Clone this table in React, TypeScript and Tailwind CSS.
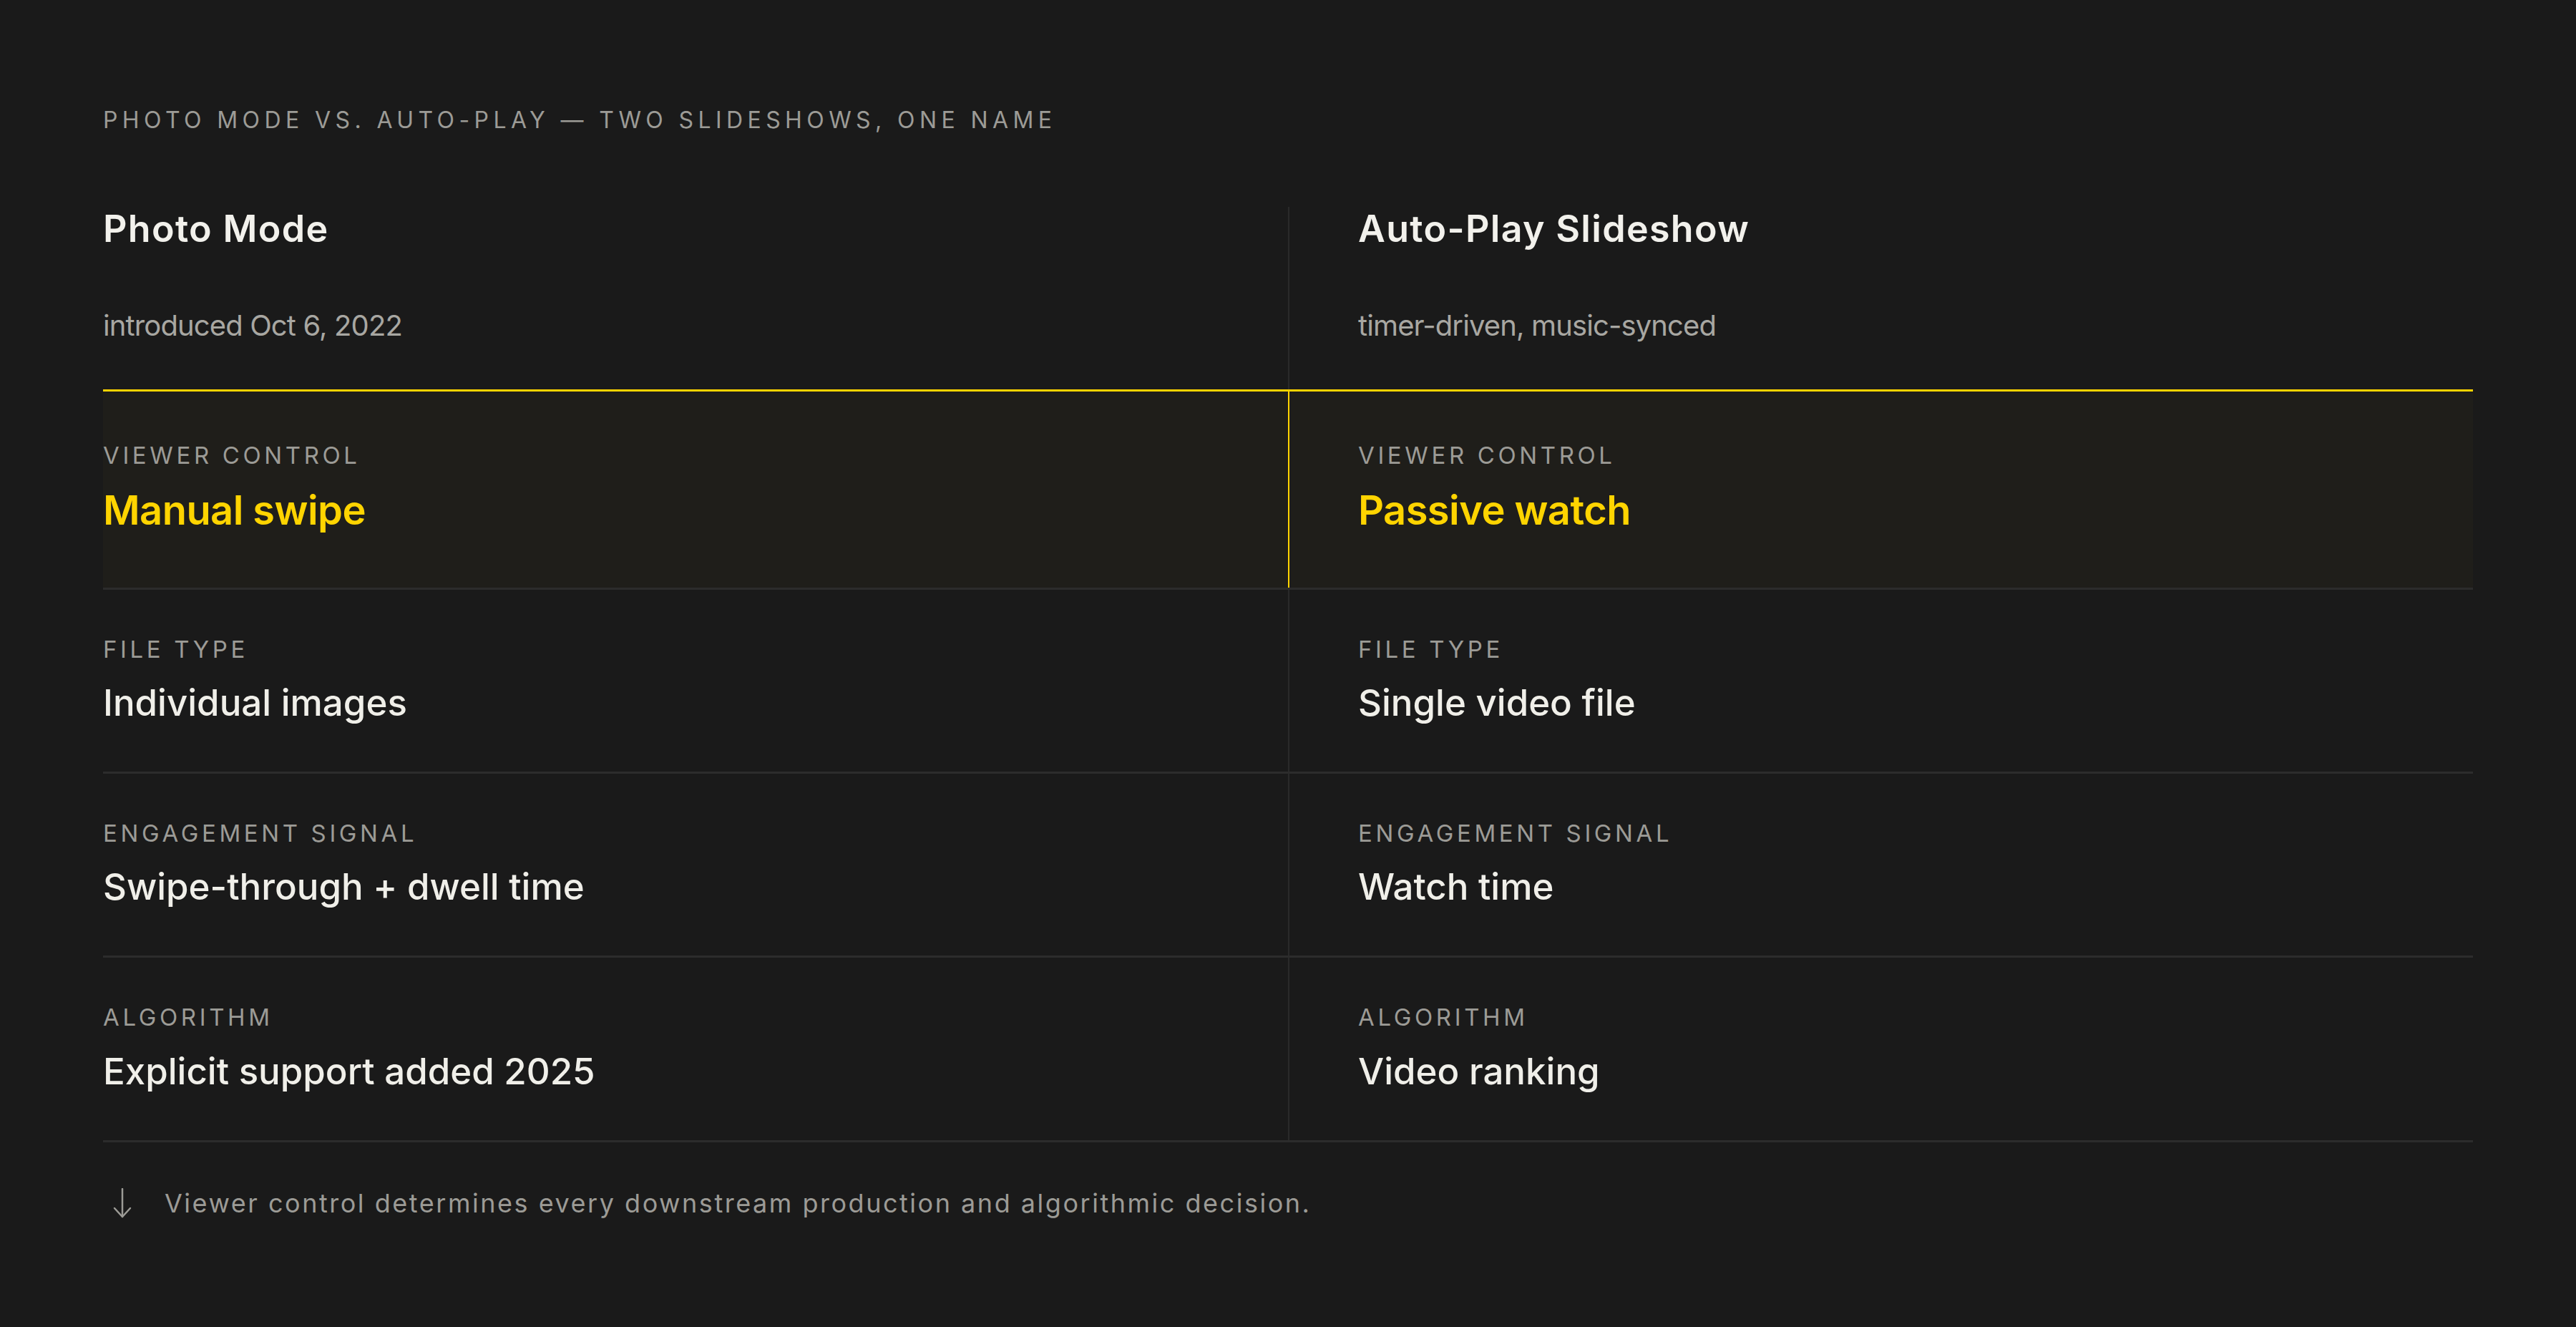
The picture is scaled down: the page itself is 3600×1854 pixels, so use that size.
import { FC } from 'react'

type Row = {
  label: string
  left: string
  right: string
  highlight?: boolean
}

const rows: Row[] = [
  { label: 'Viewer control', left: 'Manual swipe', right: 'Passive watch', highlight: true },
  { label: 'File type', left: 'Individual images', right: 'Single video file' },
  { label: 'Engagement signal', left: 'Swipe-through + dwell time', right: 'Watch time' },
  { label: 'Algorithm', left: 'Explicit support added 2025', right: 'Video ranking' },
]

const Cell: FC<{ label: string; value: string; highlight?: boolean }> = ({ label, value, highlight }) => (
  <div className="flex flex-col gap-[21px]">
    <span className="text-[33px] leading-[1.4] uppercase tracking-[0.14em] text-[#9c9b96]">{label}</span>
    {highlight ? (
      <span className="text-[56px] leading-[1.2] font-semibold tracking-[-0.01em] text-[#ffd400]">{value}</span>
    ) : (
      <span className="text-[51px] leading-[1.2] font-medium tracking-normal text-[#f0efe9]">{value}</span>
    )}
  </div>
)

const App: FC = () => {
  return (
    <div
      className="min-h-screen bg-[#1a1a1a] px-[144px] pt-[146px] pb-[120px]"
      style={{ fontFamily: 'Inter, "Noto Sans", sans-serif' }}
    >
      {/* section label */}
      <p className="text-[32px] leading-[1.4] uppercase tracking-[0.2em] text-[#9c9b96]">
        Photo Mode vs. Auto-Play — two slideshows, one name
      </p>

      {/* column headers */}
      <div className="mt-[98px] grid grid-cols-2">
        <div className="pb-[59px]">
          <h2 className="text-[52px] leading-[1.2] font-semibold tracking-[0.025em] text-[#f2f1ec]">Photo Mode</h2>
          <p className="mt-[74px] text-[40px] leading-[1.5] tracking-[-0.022em] text-[#a8a7a2]">introduced Oct 6, 2022</p>
        </div>
        <div className="border-l-2 border-[#2a2a2a] pl-[96px] pb-[59px]">
          <h2 className="text-[52px] leading-[1.2] font-semibold tracking-[0.025em] text-[#f2f1ec]">Auto-Play Slideshow</h2>
          <p className="mt-[74px] text-[40px] leading-[1.5] tracking-[-0.022em] text-[#a8a7a2]">timer-driven, music-synced</p>
        </div>
      </div>

      {/* comparison rows */}
      <div className="border-t-[3px] border-[#ffd400]">
        {rows.map(row =>
          row.highlight ? (
            <div key={row.label} className="grid grid-cols-2 bg-[#1f1e1a] border-b-[3px] border-[#2c2c2c]">
              <div className="pt-[66px] pb-[73px]">
                <Cell label={row.label} value={row.left} highlight />
              </div>
              <div className="border-l-2 border-[#ffd400] pl-[96px] pt-[66px] pb-[73px]">
                <Cell label={row.label} value={row.right} highlight />
              </div>
            </div>
          ) : (
            <div key={row.label} className="grid grid-cols-2 border-b-[3px] border-[#2c2c2c]">
              <div className="pt-[60px] pb-[66px]">
                <Cell label={row.label} value={row.left} />
              </div>
              <div className="border-l-2 border-[#2a2a2a] pl-[96px] pt-[60px] pb-[66px]">
                <Cell label={row.label} value={row.right} />
              </div>
            </div>
          )
        )}
      </div>

      {/* footnote */}
      <div className="mt-[60px] flex items-center gap-[46px] pl-[14px]">
        <svg width="26" height="42" viewBox="0 0 26 42" fill="none" stroke="#9c9b96" strokeWidth="2.5" strokeLinecap="round" strokeLinejoin="round">
          <path d="M13 1V40" />
          <path d="M2 28L13 40L24 28" />
        </svg>
        <p className="text-[36px] leading-[1.4] tracking-[0.07em] text-[#9c9b96]">
          Viewer control determines every downstream production and algorithmic decision.
        </p>
      </div>
    </div>
  )
}

export default App
